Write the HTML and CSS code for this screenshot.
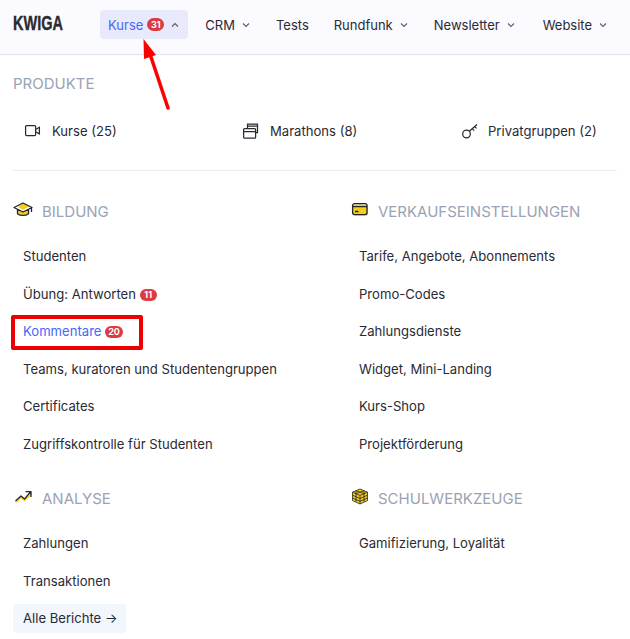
FILE: index.html
```html
<!DOCTYPE html>
<html lang="de">
<head>
<meta charset="utf-8">
<title>KWIGA</title>
<link rel="stylesheet" href="styles.css">
</head>
<body>
<header class="topbar">
  <div class="logo"><span class="logo-text">KWIGA</span></div>
  <nav class="nav">
    <a class="nav-item active">Kurse <span class="badge badge-nav">31</span>
      <svg class="chev" viewBox="0 0 10 10"><path d="M2 6.5 5 3.5 8 6.5"/></svg></a>
    <a class="nav-item">CRM <svg class="chev" viewBox="0 0 10 10"><path d="M2 3.5 5 6.5 8 3.5"/></svg></a>
    <a class="nav-item">Tests</a>
    <a class="nav-item">Rundfunk <svg class="chev" viewBox="0 0 10 10"><path d="M2 3.5 5 6.5 8 3.5"/></svg></a>
    <a class="nav-item">Newsletter <svg class="chev" viewBox="0 0 10 10"><path d="M2 3.5 5 6.5 8 3.5"/></svg></a>
    <a class="nav-item nav-item-last">Website <svg class="chev" viewBox="0 0 10 10"><path d="M2 3.5 5 6.5 8 3.5"/></svg></a>
  </nav>
</header>
<main class="menu">
  <h2 class="section-title">PRODUKTE</h2>
  <div class="products">
    <a class="product">
      <svg class="picon" viewBox="0 0 16 16"><rect x="1.6" y="2.6" width="10" height="10" rx="1"/><path d="M11.6 6.5 15.4 4.3V10.9L11.6 8.7"/></svg>
      Kurse (25)</a>
    <a class="product">
      <svg class="picon" viewBox="0 0 16 16"><rect x="1.6" y="5.6" width="12" height="9.6" rx="1"/><path d="M1.6 8.6H13.6M5.5 5.5V1H15.5V9.5H13.8M5.5 3.2H15.5"/></svg>
      Marathons (8)</a>
    <a class="product">
      <svg class="picon" viewBox="0 0 16 16"><circle cx="6.5" cy="11" r="3.8"/><path d="M9.3 8.3 17 1.5M12.4 5.6 14.2 7.6M14.6 3.6 16.6 5.4"/></svg>
      Privatgruppen (2)</a>
  </div>
  <hr class="divider">
  <div class="columns">
    <section class="group">
      <h3 class="group-title">
        <svg class="gicon" viewBox="0 0 20 16"><path class="fy" d="M5 8v4.5c2.8 2 7.2 2 10 0V8l-5 2.6z"/><path class="fy" d="M5 6 10 2l6 3.5L10 9z"/><path class="ol" d="M1 6.5 10 2l9 4.5L10 11zM4.5 8.5v4.2c3 2.3 8 2.3 11 0V8.5M18.5 7v4"/></svg>
        BILDUNG</h3>
      <ul class="links">
        <li><a>Studenten</a></li>
        <li><a>Übung: Antworten <span class="badge">11</span></a></li>
        <li><a class="current">Kommentare <span class="badge">20</span></a></li>
        <li><a>Teams, kuratoren und Studentengruppen</a></li>
        <li><a>Certificates</a></li>
        <li><a>Zugriffskontrolle für Studenten</a></li>
      </ul>
    </section>
    <section class="group">
      <h3 class="group-title">
        <svg class="gicon" viewBox="0 0 20 16"><rect class="fy" x="4" y="3.5" width="15" height="11" rx="1.5"/><rect class="ol" x="3.6" y="2.6" width="14.4" height="11" rx="2"/><path class="ol" d="M3.6 5.6H18M6 10.5h3.5"/></svg>
        VERKAUFSEINSTELLUNGEN</h3>
      <ul class="links">
        <li><a>Tarife, Angebote, Abonnements</a></li>
        <li><a>Promo-Codes</a></li>
        <li><a>Zahlungsdienste</a></li>
        <li><a>Widget, Mini-Landing</a></li>
        <li><a>Kurs-Shop</a></li>
        <li><a>Projektförderung</a></li>
      </ul>
    </section>
    <section class="group">
      <h3 class="group-title">
        <svg class="gicon" viewBox="0 0 20 16"><path class="trend-y" d="M2.5 14.5 8 9.5l3.5 3L18.5 6"/><path class="ol" d="M2.5 13 8 8l3.5 3L17.5 4M12.5 3.6H18V9"/></svg>
        ANALYSE</h3>
      <ul class="links">
        <li><a>Zahlungen</a></li>
        <li><a>Transaktionen</a></li>
        <li><a class="all-reports">Alle Berichte →</a></li>
      </ul>
    </section>
    <section class="group">
      <h3 class="group-title">
        <svg class="gicon" viewBox="0 0 20 16"><path class="fy" d="M11 1 18.5 4.2V12.5L11 16 3.5 12.5V4.2z"/><path class="ol cube" d="M11 1 18.5 4.2V12.5L11 16 3.5 12.5V4.2zM3.5 4.2 11 7.5 18.5 4.2M11 7.5V16M3.5 7.2 11 10.5 18.5 7.2M3.5 10 11 13.3 18.5 10M7 2.6V14M15 2.6V14M7 5.8 15 2.6M15 5.8 7 2.6"/></svg>
        SCHULWERKZEUGE</h3>
      <ul class="links">
        <li><a>Gamifizierung, Loyalität</a></li>
      </ul>
    </section>
  </div>
</main>
<div class="annot-box"></div>
<svg class="annot-arrow" viewBox="0 0 40 80"><path d="M27 69 9 15" class="shaft"/><path d="M2.5 0 15 16 3 20z" class="head"/></svg>
</body>
</html>
```

FILE: styles.css
```css
* { box-sizing: border-box; }
html, body { margin: 0; padding: 0; }
body {
  position: relative;
  width: 630px;
  height: 639px;
  overflow: hidden;
  background: #fff;
  font-family: Inter, "Liberation Sans", sans-serif;
  font-size: 13.1px;
  color: #2a2a33;
}
a { color: inherit; text-decoration: none; }

.topbar {
  height: 55px;
  display: flex;
  align-items: center;
  padding: 0 0 5px 13px;
  background: #fafaff;
  border-bottom: 1px solid #e2e2ee;
}
.logo { width: 87px; flex: none; line-height: 20px; }
.logo-text {
  display: inline-block;
  font-family: "Liberation Sans", sans-serif;
  font-weight: 700;
  font-size: 21px;
  color: #2b2b2f;
  -webkit-text-stroke: 0.4px #2b2b2f;
  transform: scaleX(0.69);
  transform-origin: left center;
  position: relative;
  top: -1px;
}
.nav { display: flex; align-items: center; gap: 9px; font-size: 13px; }
.nav-item {
  display: flex;
  align-items: center;
  gap: 4px;
  height: 29px;
  padding: 0 8px;
  border-radius: 4px;
  white-space: nowrap;
}
.nav-item-last { margin-left: 2px; }
.nav-item.active { background: #e8eafb; color: #4567f5; }
.chev { width: 10px; height: 10px; margin-left: 2px; fill: none; stroke: #5c5c66; stroke-width: 1.1; }

.badge {
  display: inline-block;
  min-width: 17px;
  height: 12px;
  line-height: 12px;
  padding: 0 3px;
  border-radius: 7px;
  background: #dd3a41;
  color: #fff;
  font-size: 9px;
  font-weight: 700;
  text-align: center;
  vertical-align: 1px;
}
.badge-nav { height: 13px; line-height: 13px; }

.menu { padding: 0 13px; }
.section-title {
  margin: 0;
  padding-top: 20px;
  font-size: 15px;
  line-height: 17px;
  font-weight: 400;
  color: #9aa3b5;
}
.products {
  display: grid;
  grid-template-columns: 218px 218px 1fr;
  align-items: center;
  height: 78px;
  padding-left: 11px;
}
.product { display: flex; align-items: center; gap: 12px; white-space: nowrap; }
.picon { width: 16px; height: 16px; fill: none; stroke: #2a2a33; stroke-width: 1.25; flex: none; overflow: visible; }
.divider { border: 0; border-top: 1px solid #ececf2; margin: 0; }

.columns {
  display: grid;
  grid-template-columns: 336px 1fr;
  row-gap: 25.75px;
  padding-top: 30px;
}
.group-title {
  display: flex;
  align-items: center;
  gap: 9px;
  margin: 0 0 16.25px;
  height: 20px;
  font-size: 15px;
  font-weight: 400;
  color: #9aa3b5;
  white-space: nowrap;
}
.gicon { width: 20px; height: 16px; flex: none; position: relative; top: -2px; overflow: visible; }
.fy { fill: #f5cf1d; }
.ol { fill: none; stroke: #25252b; stroke-width: 1.3; stroke-linejoin: round; }
.ol.cube { stroke-width: 0.8; }
.trend-y { fill: none; stroke: #f5cf1d; stroke-width: 1.4; }

.links { list-style: none; margin: 0; padding: 0; }
.links li { height: 37.5px; display: flex; align-items: center; }
.links a { padding: 0 10px; white-space: nowrap; }
.links a.current { color: #4567f5; }
.links a.all-reports {
  display: flex;
  align-items: center;
  height: 29px;
  padding-right: 9px;
  border-radius: 4px;
  background: #f2f6fd;
}

.annot-box {
  position: absolute;
  left: 11px;
  top: 315px;
  width: 132px;
  height: 35px;
  border: 4px solid #ee0000;
  border-radius: 2px;
}
.annot-arrow { position: absolute; left: 141px; top: 39px; width: 40px; height: 80px; overflow: visible; }
.shaft { fill: none; stroke: #f00; stroke-width: 3.5; stroke-linecap: round; }
.head { fill: #f00; }
```
